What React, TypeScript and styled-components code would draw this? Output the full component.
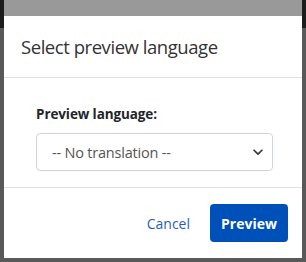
import React, { useState } from "react";
import styled, { createGlobalStyle } from "styled-components";

const GlobalStyle = createGlobalStyle`
    html, body {
        margin:0;
        padding:0;
        width:306px;
        height:262px;
        overflow:hidden;
    }
    body {
        font-family:"Open Sans", "Noto Sans", sans-serif;
        color:#212529;
    }
`;

const languages = ["-- No translation --", "English", "Deutsch", "Français"];

const App = () => {
    const [lang, setLang] = useState(languages[0]);

    return(
        <>
            <GlobalStyle/>
            <Page>
                <DimStrip/>
                <Dialog>
                    <Header>
                        <Title>Select preview language</Title>
                    </Header>
                    <Body>
                        <Label htmlFor="preview-lang">Preview language:</Label>
                        <SelectWrap>
                            <Select id="preview-lang" value={lang} onChange={e=>setLang(e.target.value)}>
                                {languages.map(l=>(
                                    <option key={l} value={l}>{l}</option>
                                ))}
                            </Select>
                            <Chevron viewBox="0 0 16 16">
                                <path d="M3.5 6l4.5 4.5L12.5 6" fill="none" stroke="#343a40" strokeWidth="2" strokeLinecap="round" strokeLinejoin="round"/>
                            </Chevron>
                        </SelectWrap>
                    </Body>
                    <Footer>
                        <LinkButton>Cancel</LinkButton>
                        <PrimaryButton>Preview</PrimaryButton>
                    </Footer>
                </Dialog>
            </Page>
        </>
    )
}

const Page = styled.div`
    width:306px;
    height:262px;
    box-sizing:border-box;
    padding:0 4px 4px;
    display:flex;
    flex-direction:column;
    background:linear-gradient(#1c1c1c 0 28px, #595959 28px);
`;

const DimStrip = styled.div`
    height:16px;
    flex:none;
    background-color:#999999;
`;

const Dialog = styled.div`
    flex:1;
    display:flex;
    flex-direction:column;
    background-color:#ffffff;
`;

const Header = styled.div`
    height:62px;
    box-sizing:border-box;
    padding:0 16px 0 17px;
    display:flex;
    align-items:center;
    border-bottom:1px solid #dee2e6;
`;

const Title = styled.h5`
    margin:0;
    font-size:18.5px;
    font-weight:400;
    color:#333333;
    letter-spacing:-0.45px;
`;

const Body = styled.div`
    padding:26px 29px 16px 32px;
    display:flex;
    flex-direction:column;
    border-bottom:1px solid #dee2e6;
`;

const Label = styled.label`
    font-size:13.5px;
    font-weight:700;
    color:#212529;
    margin-bottom:8px;
    line-height:21px;
    letter-spacing:-0.1px;
`;

const SelectWrap = styled.div`
    position:relative;
`;

const Select = styled.select`
    width:100%;
    height:38px;
    box-sizing:border-box;
    appearance:none;
    padding:0 32px 0 15px;
    font-family:"Open Sans", "Noto Sans", sans-serif;
    font-size:14.5px;
    letter-spacing:-0.2px;
    color:#555555;
    background-color:#ffffff;
    border:1px solid #ced4da;
    border-radius:4px;
    outline:none;
`;

const Chevron = styled.svg`
    position:absolute;
    right:8px;
    top:12px;
    width:14px;
    height:14px;
    pointer-events:none;
`;

const Footer = styled.div`
    flex:1;
    display:flex;
    justify-content:flex-end;
    align-items:center;
    gap:12px;
    padding:0 14px 0 16px;
`;

const LinkButton = styled.button`
    border:none;
    background:none;
    padding:0 8px;
    height:38px;
    font-family:"Open Sans", "Noto Sans", sans-serif;
    font-size:14px;
    color:#1f5fbf;
    cursor:pointer;
`;

const PrimaryButton = styled.button`
    width:78px;
    height:38px;
    border:none;
    border-radius:4px;
    background-color:#0050b9;
    color:#ffffff;
    font-family:"Open Sans", "Noto Sans", sans-serif;
    font-size:14px;
    font-weight:700;
    cursor:pointer;
`;

export default App;
